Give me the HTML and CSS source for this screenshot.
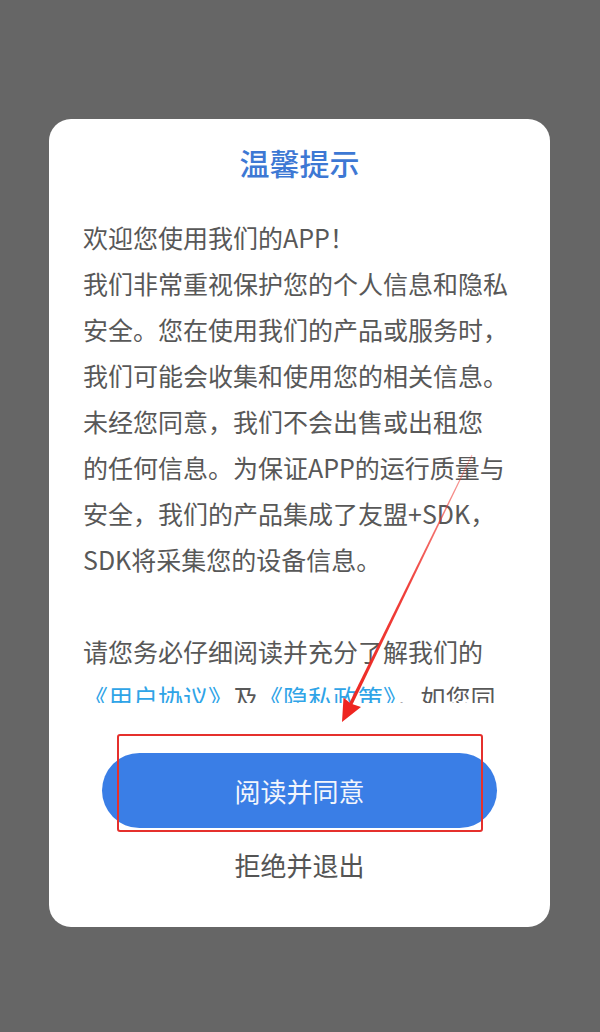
FILE: index.html
```html
<!DOCTYPE html>
<html lang="zh-CN">
<head>
<meta charset="utf-8">
<title>温馨提示</title>
<link rel="stylesheet" href="styles.css">
</head>
<body>
<div class="dialog">
  <h1 class="title">温馨提示</h1>
  <div class="content">
    <p class="para">欢迎您使用我们的APP！<br>我们非常重视保护您的个人信息和隐私<br>安全。您在使用我们的产品或服务时，<br>我们可能会收集和使用您的相关信息。<br>未经您同意，我们不会出售或出租您<br>的任何信息。为保证APP的运行质量与<br>安全，我们的产品集成了友盟+SDK，<br>SDK将采集您的设备信息。</p>
    <p class="para gap">请您务必仔细阅读并充分了解我们的<br><span class="link">《用户协议》</span>及<span class="link">《隐私政策》</span>，如您同<br>意，请点击“阅读并同意”开始接受我们<br>的服务。</p>
  </div>
  <button class="agree">阅读并同意</button>
  <div class="refuse">拒绝并退出</div>
</div>
<div class="mark"></div>
<svg class="arrow" width="600" height="1032" viewBox="0 0 600 1032">
  <defs>
    <linearGradient id="fade" x1="472" y1="455" x2="342" y2="722" gradientUnits="userSpaceOnUse">
      <stop offset="0" stop-color="#ee3a34" stop-opacity="0.45"/>
      <stop offset="0.5" stop-color="#ee2b25" stop-opacity="0.9"/>
      <stop offset="1" stop-color="#ee2520"/>
    </linearGradient>
  </defs>
  <polygon points="472.4,455.2 471.6,454.8 346.4,709.0 349.6,710.6" fill="url(#fade)"/>
  <polygon points="342,722 343.5,697.5 350.5,703.5 361,707" fill="#ee2520"/>
</svg>
</body>
</html>
```
FILE: styles.css
```css
html, body {
  margin: 0;
  padding: 0;
}
body {
  width: 600px;
  height: 1032px;
  background: #666666;
  padding: 119px 50px 0 49px;
  box-sizing: border-box;
  position: relative;
  overflow: hidden;
  font-family: "Noto Sans CJK SC", "Noto Sans", sans-serif;
}
.dialog {
  width: 501px;
  height: 808px;
  background: #ffffff;
  border-radius: 22px;
  display: flex;
  flex-direction: column;
  box-sizing: border-box;
  padding-top: 23px;
}
.title {
  margin: 0;
  font-size: 30px;
  line-height: 40px;
  font-weight: 500;
  color: #3d78d4;
  text-align: center;
}
.content {
  margin-top: 32px;
  height: 489px;
  overflow: hidden;
  padding: 0 20px 0 34px;
  font-size: 25px;
  line-height: 46px;
  color: #585858;
  white-space: nowrap;
}
.para {
  margin: 0;
}
.para.gap {
  margin-top: 46px;
}
.link {
  color: #2fa4e7;
}
.agree {
  margin: 50px 53px 0;
  height: 75px;
  border: none;
  border-radius: 38px;
  background: #3a7ee6;
  color: #f2f5fc;
  font-family: inherit;
  font-size: 26px;
  padding: 0;
}
.refuse {
  margin-top: 17px;
  text-align: center;
  font-size: 26px;
  line-height: 40px;
  color: #545454;
}
.mark {
  position: absolute;
  left: 117px;
  top: 734px;
  width: 362px;
  height: 94px;
  border: 2px solid #e5302c;
  border-radius: 3px;
}
.arrow {
  position: absolute;
  left: 0;
  top: 0;
  pointer-events: none;
}
```
